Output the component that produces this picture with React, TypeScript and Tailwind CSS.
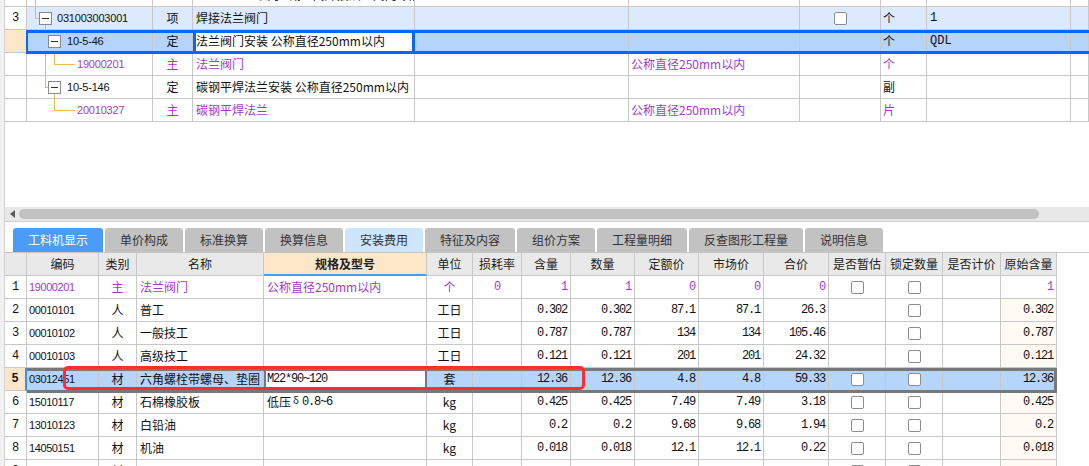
import React from "react";

const SANS = "font-['Liberation_Sans','Noto_Sans_CJK_SC',sans-serif]";
const CJK = "font-['Noto_Sans_CJK_SC','Liberation_Sans',sans-serif]";
const MONO = "font-['Liberation_Mono','Noto_Sans_CJK_SC',monospace]";

const PURPLE = "text-[#a23cc6]";
const LINE = "bg-[#f2b35f]";

const CELL =
  "flex h-full shrink-0 items-center overflow-hidden whitespace-nowrap border-b border-r border-[#c8c8c8]";

const TOP_COLS = [
  "w-[22px] justify-center",
  "w-[126px] relative",
  "w-[40px] justify-center",
  "w-[222px] pl-[3px]",
  "w-[214px] pl-[3px]",
  "w-[171px] pl-[2px]",
  "w-[81px] justify-center",
  "w-[46px] pl-[2px]",
  "w-[144px] pl-[3px]",
  "w-[18px]",
];

function Box({ className = "" }: { className?: string }) {
  return (
    <span className={`flex h-[13px] w-[13px] shrink-0 items-center justify-center border border-[#8a8a8a] bg-white ${className}`}>
      <span className="h-px w-[7px] bg-[#333]" />
    </span>
  );
}

function Check() {
  return <span className="block h-[13px] w-[13px] rounded-[2px] border border-[#8c8c8c] bg-white" />;
}

type TopRowProps = {
  cells: React.ReactNode[];
  bg?: string;
  rnBg?: string;
  color?: string;
  nameBg?: string;
  overlay?: React.ReactNode;
};

function TopRow({ cells, bg = "bg-white", rnBg = "bg-white", color = "text-[#111]", nameBg, overlay }: TopRowProps) {
  return (
    <div className={`relative flex h-[23px] text-[12px] ${color}`}>
      {cells.map((c, i) => (
        <div
          key={i}
          className={`${CELL} ${TOP_COLS[i]} ${i === 0 ? rnBg + " text-[#111]" : i === 3 && nameBg ? nameBg : bg} ${
            i === 1 ? SANS + " tracking-[-0.2px] text-[11px]" : i === 0 || i === 8 ? MONO : CJK
          }`}
        >
          {c}
        </div>
      ))}
      {overlay}
    </div>
  );
}

function TopGrid() {
  return (
    <div className="h-[207px] shrink-0 overflow-hidden">
      <div className="h-[7px] overflow-hidden">
        <div className="-mt-[16px]">
          <TopRow
            cells={[
              "",
              <span className={`absolute left-[8px] top-0 h-full w-px ${LINE}`} />,
              "",
              "DN250mm以内 - 截止阀焊接法兰阀门 项目 3.73",
              "",
              "",
              "",
              "",
              "",
              "",
            ]}
          />
        </div>
      </div>

      <TopRow
        bg="bg-[#dde9fc]"
        cells={[
          "3",
          <>
            <span className={`absolute left-[8px] top-0 h-[12px] w-px ${LINE}`} />
            <span className={`absolute left-[8px] top-[11px] h-px w-[4px] ${LINE}`} />
            <span className={`absolute bottom-0 left-[18px] top-[18px] w-px ${LINE}`} />
            <Box className="ml-[12px]" />
            <span className="ml-[5px]">031003003001</span>
          </>,
          "项",
          "焊接法兰阀门",
          "",
          "",
          <Check />,
          "个",
          "1",
          "",
        ]}
      />

      <TopRow
        bg="bg-[#b4d4fc]"
        rnBg="bg-[#fde6c9]"
        nameBg="bg-white"
        cells={[
          "",
          <>
            <Box className="ml-[21px]" />
            <span className="ml-[6px]">10-5-46</span>
          </>,
          "定",
          "法兰阀门安装 公称直径250mm以内",
          "",
          "",
          "",
          "个",
          "QDL",
          "",
        ]}
        overlay={
          <>
            <div className="pointer-events-none absolute left-[21px] right-0 top-0 z-10 h-[24px] border-y-[3px] border-l-2 border-[#0a66f5]" />
            <div className="pointer-events-none absolute left-[188px] top-0 z-10 h-[24px] w-[222px] border-[3px] border-[#0a66f5]" />
          </>
        }
      />

      <TopRow
        color={PURPLE}
        cells={[
          "",
          <>
            <span className={`absolute left-[18px] top-0 h-full w-px ${LINE}`} />
            <span className={`absolute left-[27px] top-0 h-[12px] w-px ${LINE}`} />
            <span className={`absolute left-[27px] top-[11px] h-px w-[21px] ${LINE}`} />
            <span className="ml-[50px]">19000201</span>
          </>,
          "主",
          "法兰阀门",
          "",
          "公称直径250mm以内",
          "",
          "个",
          "",
          "",
        ]}
      />

      <TopRow
        cells={[
          "",
          <>
            <span className={`absolute left-[18px] top-0 h-[12px] w-px ${LINE}`} />
            <span className={`absolute left-[18px] top-[11px] h-px w-[3px] ${LINE}`} />
            <span className={`absolute bottom-0 left-[27px] top-[18px] w-px ${LINE}`} />
            <Box className="ml-[21px]" />
            <span className="ml-[6px]">10-5-146</span>
          </>,
          "定",
          "碳钢平焊法兰安装 公称直径250mm以内",
          "",
          "",
          "",
          "副",
          "",
          "",
        ]}
      />

      <TopRow
        color={PURPLE}
        cells={[
          "",
          <>
            <span className={`absolute left-[27px] top-0 h-[12px] w-px ${LINE}`} />
            <span className={`absolute left-[27px] top-[11px] h-px w-[21px] ${LINE}`} />
            <span className="ml-[50px]">20010327</span>
          </>,
          "主",
          "碳钢平焊法兰",
          "",
          "公称直径250mm以内",
          "",
          "片",
          "",
          "",
        ]}
      />
    </div>
  );
}

function ScrollBar() {
  return (
    <div className="flex h-[15px] shrink-0 items-center border-b border-[#d0d0d0] bg-[#e8e8e8] pl-[5px]">
      <span className="h-0 w-0 border-y-[4px] border-r-[5px] border-y-transparent border-r-[#5a5a5a]" />
      <span className="ml-[4px] h-[10px] w-[1020px] rounded-full bg-[#c1c1c1]" />
    </div>
  );
}

const TABS: [string, string][] = [
  ["工料机显示", "w-[90px]"],
  ["单价构成", "w-[78px]"],
  ["标准换算", "w-[78px]"],
  ["换算信息", "w-[78px]"],
  ["安装费用", "w-[78px]"],
  ["特征及内容", "w-[90px]"],
  ["组价方案", "w-[78px]"],
  ["工程量明细", "w-[90px]"],
  ["反查图形工程量", "w-[114px]"],
  ["说明信息", "w-[78px]"],
];

function Tabs() {
  return (
    <div className={`flex h-[24px] shrink-0 gap-[2px] pl-[8px] text-[12px] ${CJK}`}>
      {TABS.map(([label, w], i) => (
        <div
          key={label}
          className={`flex h-full items-center justify-center rounded-t-[3px] ${w} ${
            i === 0 ? "bg-[#4a9cf6] text-white" : i === 4 ? "bg-[#cde5fd] text-[#333]" : "bg-[#c2c2c2] text-[#333]"
          }`}
        >
          {label}
        </div>
      ))}
    </div>
  );
}

const BOT_COLS = [
  "w-[22px] justify-center",
  "w-[72px] pl-[2px]",
  "w-[38px] justify-center",
  "w-[127px] pl-[3px]",
  "w-[163px] pl-[3px]",
  "w-[46px] justify-center",
  "w-[49px] justify-center",
  "w-[49px] justify-end pr-[3px]",
  "w-[64px] justify-end pr-[3px]",
  "w-[64px] justify-end pr-[3px]",
  "w-[65px] justify-end pr-[3px]",
  "w-[65px] justify-end pr-[3px]",
  "w-[57px] justify-center",
  "w-[57px] justify-center",
  "w-[58px] justify-center",
  "w-[56px] justify-end pr-[3px]",
];

const HEADERS = [
  "",
  "编码",
  "类别",
  "名称",
  "规格及型号",
  "单位",
  "损耗率",
  "含量",
  "数量",
  "定额价",
  "市场价",
  "合价",
  "是否暂估",
  "锁定数量",
  "是否计价",
  "原始含量",
];

type BotRow = { n: string; c: React.ReactNode[]; purple?: boolean; selected?: boolean };

const ROWS: BotRow[] = [
  {
    n: "1",
    purple: true,
    c: ["19000201", "主", "法兰阀门", "公称直径250mm以内", "个", "0", "1", "1", "0", "0", "0", "cb", "cb", "", "1"],
  },
  { n: "2", c: ["00010101", "人", "普工", "", "工日", "", "0.302", "0.302", "87.1", "87.1", "26.3", "", "cb", "", "0.302"] },
  { n: "3", c: ["00010102", "人", "一般技工", "", "工日", "", "0.787", "0.787", "134", "134", "105.46", "", "cb", "", "0.787"] },
  { n: "4", c: ["00010103", "人", "高级技工", "", "工日", "", "0.121", "0.121", "201", "201", "24.32", "", "cb", "", "0.121"] },
  {
    n: "5",
    selected: true,
    c: [
      "03012451",
      "材",
      "六角螺栓带螺母、垫圈",
      <span className={`${MONO} text-[12px] tracking-[-1.2px]`}>M22*90~120</span>,
      "套",
      "",
      "12.36",
      "12.36",
      "4.8",
      "4.8",
      "59.33",
      "cb",
      "cb",
      "",
      "12.36",
    ],
  },
  {
    n: "6",
    c: [
      "15010117",
      "材",
      "石棉橡胶板",
      <span className="flex items-center">
        低压<span className="relative -top-[3px] ml-[2px] mr-[3px] text-[10px]">δ</span>
        <span className={`${MONO} text-[12px] tracking-[-1.2px]`}>0.8~6</span>
      </span>,
      "kg",
      "",
      "0.425",
      "0.425",
      "7.49",
      "7.49",
      "3.18",
      "cb",
      "cb",
      "",
      "0.425",
    ],
  },
  { n: "7", c: ["13010123", "材", "白铅油", "", "kg", "", "0.2", "0.2", "9.68", "9.68", "1.94", "cb", "cb", "", "0.2"] },
  { n: "8", c: ["14050151", "材", "机油", "", "kg", "", "0.018", "0.018", "12.1", "12.1", "0.22", "cb", "cb", "", "0.018"] },
  { n: "9", c: ["", "材", "", "", "", "", "", "", "", "", "", "cb", "cb", "", ""] },
];

function fontFor(col: number) {
  if (col === 0) return `${MONO} text-[12px] text-[#111]`;
  if (col === 1) return `${SANS} text-[11px] tracking-[-0.4px]`;
  if (col >= 6) return `${MONO} text-[12px] tracking-[-1.2px]`;
  return `${CJK} text-[12px]`;
}

function BottomGrid() {
  return (
    <div className="flex-1 border-t border-[#c6c6c6]">
      <div className={`flex h-[23px] text-[12px] text-[#222] ${CJK}`}>
        {HEADERS.map((h, i) => (
          <div
            key={i}
            className={`${CELL} ${BOT_COLS[i]} justify-center! px-0! border-[#c4c4c4] ${
              i === 4 ? "border-b-2 border-b-[#4a9cf5] bg-[#fde7c8] font-bold" : "bg-[#e9e9e9]"
            }`}
          >
            {h}
          </div>
        ))}
      </div>

      {ROWS.map((r) => {
        const cells = [r.n, ...r.c];
        return (
          <div key={r.n} className={`relative flex h-[23px] ${r.purple ? PURPLE : "text-[#111]"}`}>
            {cells.map((v, i) => {
              let bg = "bg-white";
              if (r.selected) bg = i === 0 ? "bg-[#fde6c9]" : i === 4 ? "bg-white" : "bg-[#b5d5fb]";
              else if (i === 15 && r.n !== "1") bg = "bg-[#fffaf3]";
              return (
                <div
                  key={i}
                  className={`${CELL} ${BOT_COLS[i]} ${bg} ${fontFor(i)} ${
                    r.selected && i === 0 ? "border-r-2 border-r-[#3a8ef5] font-bold" : ""
                  }`}
                >
                  {v === "cb" ? <Check /> : v}
                </div>
              );
            })}
            {r.selected ? (
              <>
                <div className="pointer-events-none absolute left-[22px] top-0 z-10 h-[25px] w-[1030px] border-y-[3px] border-r-[3px] border-[#787878]" />
                <div className="pointer-events-none absolute left-[259px] top-0 z-10 h-[25px] w-[163px] border-x-2 border-[#787878]" />
              </>
            ) : null}
          </div>
        );
      })}
    </div>
  );
}

export default function App() {
  return (
    <div className="relative flex h-[466px] w-[1089px] overflow-hidden bg-white text-[12px] text-[#111]">
      <div className="h-full w-[5px] shrink-0 border-r border-[#d2d2d2] bg-[#f1f1f1]" />
      <div className="flex min-w-0 flex-1 flex-col">
        <TopGrid />
        <ScrollBar />
        <div className="h-[6px] shrink-0" />
        <Tabs />
        <BottomGrid />
      </div>
      <div className="pointer-events-none absolute left-[63px] top-[366px] z-20 h-[24px] w-[522px] rounded-[5px] border-[3px] border-[#ff2d2d]" />
    </div>
  );
}
